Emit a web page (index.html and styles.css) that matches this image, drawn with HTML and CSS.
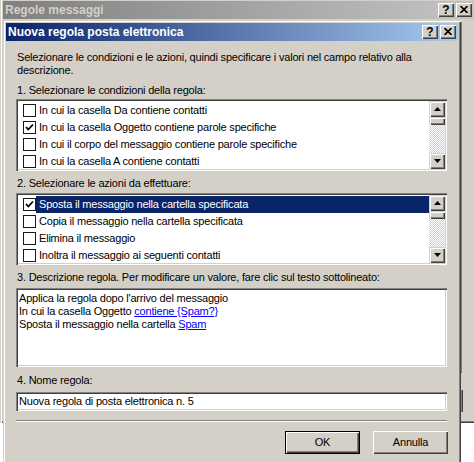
FILE: index.html
```html
<!DOCTYPE html>
<html lang="it">
<head>
<meta charset="utf-8">
<title>Nuova regola posta elettronica</title>
<link rel="stylesheet" href="styles.css">
</head>
<body>
<div class="desktop">
  <div class="win outer">
    <div class="titlebar inactive">
      <span class="title-text">Regole messaggi</span>
      <div class="tbtns">
        <span class="tbtn help">?</span>
        <span class="tbtn close"><svg width="8" height="7" viewBox="0 0 8 7"><path d="M0.5 0 L7.5 7 M7.5 0 L0.5 7" stroke="#000" stroke-width="1.7" fill="none"/></svg></span>
      </div>
    </div>
    <div class="outer-body">
      <div class="ghost-list"></div>
      <div class="ghost-btn"></div>
    </div>
  </div>

  <div class="win dialog">
    <div class="titlebar active">
      <span class="title-text">Nuova regola posta elettronica</span>
      <div class="tbtns">
        <span class="tbtn help">?</span>
        <span class="tbtn close"><svg width="8" height="7" viewBox="0 0 8 7"><path d="M0.5 0 L7.5 7 M7.5 0 L0.5 7" stroke="#000" stroke-width="1.7" fill="none"/></svg></span>
      </div>
    </div>
    <div class="dlg-body">
      <p class="intro">Selezionare le condizioni e le azioni, quindi specificare i valori nel campo relativo alla descrizione.</p>

      <div class="label l1">1. Selezionare le condizioni della regola:</div>
      <div class="listbox">
        <ul class="items">
          <li class="row"><span class="cb"></span><span class="txt">In cui la casella Da contiene contatti</span></li>
          <li class="row"><span class="cb checked"><svg width="11" height="11" viewBox="0 0 11 11"><path d="M2 5 L4.3 7.5 L9 2.5" stroke="#000" stroke-width="1.8" fill="none"/></svg></span><span class="txt">In cui la casella Oggetto contiene parole specifiche</span></li>
          <li class="row"><span class="cb"></span><span class="txt">In cui il corpo del messaggio contiene parole specifiche</span></li>
          <li class="row"><span class="cb"></span><span class="txt">In cui la casella A contiene contatti</span></li>
        </ul>
        <div class="vscroll">
          <div class="sbtn"><svg width="7" height="4" viewBox="0 0 7 4"><polygon points="0,4 7,4 3.5,0" fill="#000"/></svg></div>
          <div class="thumb"></div>
          <div class="track"></div>
          <div class="sbtn"><svg width="7" height="4" viewBox="0 0 7 4"><polygon points="0,0 7,0 3.5,4" fill="#000"/></svg></div>
        </div>
      </div>

      <div class="label l2">2. Selezionare le azioni da effettuare:</div>
      <div class="listbox lb2">
        <ul class="items">
          <li class="row selected"><span class="cb checked"><svg width="11" height="11" viewBox="0 0 11 11"><path d="M2 5 L4.3 7.5 L9 2.5" stroke="#000" stroke-width="1.8" fill="none"/></svg></span><span class="txt">Sposta il messaggio nella cartella specificata</span></li>
          <li class="row"><span class="cb"></span><span class="txt">Copia il messaggio nella cartella specificata</span></li>
          <li class="row"><span class="cb"></span><span class="txt">Elimina il messaggio</span></li>
          <li class="row"><span class="cb"></span><span class="txt">Inoltra il messaggio ai seguenti contatti</span></li>
        </ul>
        <div class="vscroll">
          <div class="sbtn"><svg width="7" height="4" viewBox="0 0 7 4"><polygon points="0,4 7,4 3.5,0" fill="#000"/></svg></div>
          <div class="thumb"></div>
          <div class="track"></div>
          <div class="sbtn"><svg width="7" height="4" viewBox="0 0 7 4"><polygon points="0,0 7,0 3.5,4" fill="#000"/></svg></div>
        </div>
      </div>

      <div class="label l3">3. Descrizione regola. Per modificare un valore, fare clic sul testo sottolineato:</div>
      <div class="descbox">
        <div>Applica la regola dopo l'arrivo del messaggio</div>
        <div>In cui la casella Oggetto <a class="lnk">contiene {Spam?}</a></div>
        <div>Sposta il messaggio nella cartella <a class="lnk">Spam</a></div>
      </div>

      <div class="label l4">4. Nome regola:</div>
      <div class="edit">Nuova regola di posta elettronica n. 5</div>

      <div class="sep"></div>

      <div class="buttons">
        <div class="btn default">OK</div>
        <div class="btn">Annulla</div>
      </div>
    </div>
  </div>
</div>
</body>
</html>
```

FILE: styles.css
```css
* { box-sizing: border-box; }
html, body { margin: 0; padding: 0; }
body {
  font-family: "Liberation Sans", Arial, sans-serif;
  font-size: 11px;
  color: #000;
  background: #fff;
}
.desktop {
  position: relative;
  width: 474px;
  height: 462px;
  overflow: hidden;
  background: #fff;
}
.win { background: #d4d0c8; }

/* outer (inactive) window */
.outer {
  width: 477px;
  height: 423px;
  padding: 1px 3px 0 3px;
  box-shadow: inset 1px 0 #d4d0c8, inset 2px 0 #fff, inset 0 -1px #404040, inset 0 -2px #808080;
}
.outer-body {
  display: flex;
  flex-direction: column;
  padding-top: 3px;
}
.ghost-list {
  width: 459px;
  height: 351px;
  border-right: 1px solid #808080;
  border-bottom: 1px solid #404040;
}
.ghost-btn {
  margin-top: 17px;
  width: 460px;
  height: 22px;
  box-shadow: inset -1px 0 #404040, inset -2px 0 #808080;
}

/* title bars */
.titlebar {
  height: 18px;
  display: flex;
  align-items: center;
  justify-content: space-between;
  padding: 0 2px 0 2px;
}
.title-text {
  font-size: 12px;
  font-weight: bold;
  letter-spacing: 0;
  white-space: nowrap;
}
.inactive { background: linear-gradient(to right, #808080, #c4c4c4); }
.inactive .title-text { color: #d4d0c8; }
.active { background: linear-gradient(to right, #0a246a, #a6caf0); }
.active .title-text { color: #fff; }
.tbtns { display: flex; gap: 2px; }
.tbtn {
  width: 16px;
  height: 14px;
  background: #d4d0c8;
  box-shadow: inset 1px 1px #fff, inset -1px -1px #404040, inset -2px -2px #808080;
  display: flex;
  align-items: center;
  justify-content: center;
}
.tbtn.help {
  font-size: 12px;
  font-weight: bold;
  line-height: 14px;
  padding-bottom: 1px;
}
.tbtn.close svg { display: block; margin-top: -1px; }

/* dialog window */
.dialog {
  position: absolute;
  left: 3px;
  top: 20px;
  width: 458px;
  height: 460px;
  padding: 3px;
  box-shadow: inset 1px 1px #d4d0c8, inset 2px 2px #fff, inset -1px -1px #404040, inset -2px -2px #808080;
}
.dlg-body {
  padding: 10px 11px 0 10px;
  letter-spacing: -0.2px;
  line-height: 13px;
}
.intro { margin: 0 0 0 1px; }
.label { margin-left: 1px; height: 13px; white-space: nowrap; }
.l1 { margin-top: 7px; }
.l2 { margin-top: 6px; }
.l3 { margin-top: 6px; }
.l4 { margin-top: 7px; }

.listbox {
  margin-top: 2px;
  height: 72px;
  background: #fff;
  padding: 2px;
  display: flex;
  box-shadow: inset 1px 1px #808080, inset 2px 2px #404040, inset -1px -1px #fff, inset -2px -2px #d4d0c8;
}
.lb2 { margin-top: 3px; }
.items {
  list-style: none;
  margin: 0;
  padding: 1px 0 0 0;
  flex: 1;
  overflow: hidden;
}
.row {
  display: flex;
  align-items: center;
  height: 17px;
  padding-left: 5px;
  white-space: nowrap;
}
.cb {
  width: 13px;
  height: 13px;
  flex: none;
  border: 1px solid #1a1a1a;
  background: #fff;
  display: flex;
  align-items: center;
  justify-content: center;
}
.cb svg { display: block; }
.txt {
  flex: 1;
  height: 17px;
  line-height: 17px;
  padding-left: 3px;
}
.row.selected .txt { background: #0a246a; color: #fff; }

.vscroll {
  width: 16px;
  flex: none;
  display: flex;
  flex-direction: column;
}
.sbtn, .thumb {
  background: #d4d0c8;
  box-shadow: inset 1px 1px #d4d0c8, inset 2px 2px #fff, inset -1px -1px #404040, inset -2px -2px #808080;
}
.sbtn {
  height: 16px;
  flex: none;
  display: flex;
  align-items: center;
  justify-content: center;
}
.sbtn svg { display: block; }
.thumb { height: 8px; flex: none; }
.track {
  flex: 1;
  background: repeating-conic-gradient(#d4d0c8 0 25%, #fff 0 50%) 0 0 / 2px 2px;
}

.descbox {
  margin-top: 4px;
  height: 79px;
  background: #fff;
  padding: 4px 3px;
  box-shadow: inset 1px 1px #808080, inset 2px 2px #404040, inset -1px -1px #fff, inset -2px -2px #d4d0c8;
  white-space: nowrap;
}
.lnk { color: #0000ff; text-decoration: underline; }

.edit {
  margin-top: 5px;
  height: 19px;
  background: #fff;
  padding: 2px 3px;
  line-height: 15px;
  box-shadow: inset 1px 1px #808080, inset 2px 2px #404040, inset -1px -1px #fff, inset -2px -2px #d4d0c8;
}

.sep {
  margin-top: 9px;
  height: 2px;
  border-top: 1px solid #808080;
  border-bottom: 1px solid #fff;
}

.buttons {
  margin-top: 9px;
  display: flex;
  justify-content: flex-end;
  gap: 13px;
  margin-right: -1px;
}
.btn {
  width: 75px;
  height: 23px;
  line-height: 23px;
  text-align: center;
  background: #d4d0c8;
  box-shadow: inset 1px 1px #fff, inset -1px -1px #404040, inset -2px -2px #808080;
}
.btn.default {
  border: 1px solid #000;
  line-height: 21px;
}
```
